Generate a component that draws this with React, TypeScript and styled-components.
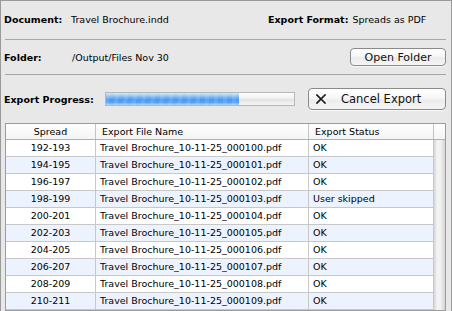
import React from 'react';
import styled, { createGlobalStyle } from 'styled-components';

const GlobalStyle = createGlobalStyle`
  html, body {
    margin: 0;
    padding: 0;
    background: #e8e8e8;
  }
  body {
    font-family: "DejaVu Sans", "Liberation Sans", sans-serif;
  }
`;

const Window = styled.div`
  box-sizing: border-box;
  width: 452px;
  height: 311px;
  border: 1px solid #9a9a9a;
  border-bottom: none;
  background: #e8e8e8;
  padding: 0 5px 0 3px;
  display: flex;
  flex-direction: column;
  overflow: hidden;
  font-size: 9.5px;
  color: #000;
`;

const InfoRow = styled.div<{ $h: number; $pb?: number }>`
  display: flex;
  align-items: center;
  height: ${(p) => p.$h}px;
  padding-bottom: ${(p) => p.$pb ?? 0}px;
  box-sizing: border-box;
  flex: none;
`;

const Group = styled.div<{ $w?: number }>`
  display: flex;
  align-items: center;
  flex: ${(p) => (p.$w ? `0 0 ${p.$w}px` : '1 1 auto')};
`;

const Label = styled.span<{ $w?: number }>`
  font-weight: bold;
  white-space: nowrap;
  flex: none;
  width: ${(p) => (p.$w ? `${p.$w}px` : 'auto')};
`;

const Value = styled.span<{ $gap?: number }>`
  white-space: nowrap;
  margin-left: ${(p) => p.$gap ?? 0}px;
`;

const Divider = styled.div`
  flex: none;
  height: 0;
  margin-left: 1px;
  border-top: 1px solid #a7a7a7;
`;

const AquaButton = styled.button<{ $w: number; $h: number; $fs: number; $start?: boolean }>`
  box-sizing: border-box;
  width: ${(p) => p.$w}px;
  height: ${(p) => p.$h}px;
  margin-left: auto;
  padding: ${(p) => (p.$start ? '0 0 0 7px' : '0')};
  border: 1px solid #8a8a8a;
  border-radius: 4px;
  background: linear-gradient(#ffffff, #f7f7f7 45%, #ececec 55%, #f5f5f5);
  font-family: "DejaVu Sans", "Liberation Sans", sans-serif;
  font-size: ${(p) => p.$fs}px;
  color: #111;
  display: flex;
  align-items: center;
  justify-content: ${(p) => (p.$start ? 'flex-start' : 'center')};
  gap: 15px;
  box-shadow: 0 1px 0 rgba(255, 255, 255, 0.7);
`;

const Progress = styled.div`
  box-sizing: border-box;
  width: 190px;
  height: 14px;
  border: 1px solid #b8b8b8;
  background: linear-gradient(#fdfdfd, #f1f1f1 45%, #e3e3e3 55%, #f5f5f5);
  overflow: hidden;
  flex: none;
`;

const ProgressFill = styled.div`
  height: 100%;
  background:
    repeating-linear-gradient(95deg, rgba(255, 255, 255, 0.1) 0 4px, rgba(255, 255, 255, 0) 4px 9px),
    linear-gradient(#cfe6fc 0%, #a0cdf7 20%, #6aaef3 40%, #4b97ec 58%, #5ba5f1 80%, #acd3f8 100%);
`;

const Table = styled.div`
  box-sizing: border-box;
  margin-left: 1px;
  width: 441px;
  height: 188px;
  flex: none;
  border: 1px solid #9c9c9c;
  background: #fff;
  display: flex;
  flex-direction: column;
  overflow: hidden;
`;

const HeaderRow = styled.div`
  display: grid;
  grid-template-columns: 90px 213px 125px 11px;
  height: 16px;
  box-sizing: border-box;
  border-bottom: 1px solid #b0b0b0;
  background: linear-gradient(#ffffff, #f4f4f4);
  flex: none;
`;

const HeadCell = styled.div<{ $center?: boolean; $plain?: boolean }>`
  box-sizing: border-box;
  border-right: ${(p) => (p.$plain ? 'none' : '1px solid #c4c4c4')};
  padding-left: ${(p) => (p.$center ? 0 : 6)}px;
  text-align: ${(p) => (p.$center ? 'center' : 'left')};
  line-height: 15px;
  white-space: nowrap;
  overflow: hidden;
`;

const Body = styled.div`
  display: flex;
  flex: 1;
  min-height: 0;
`;

const Rows = styled.div`
  width: 428px;
  flex: none;
`;

const Row = styled.div<{ $alt: boolean }>`
  display: grid;
  grid-template-columns: 90px 213px 125px;
  height: 17px;
  box-sizing: border-box;
  border-bottom: 1px solid #c8c8c8;
  background: ${(p) => (p.$alt ? '#edf3fe' : '#ffffff')};
`;

const Cell = styled.div<{ $center?: boolean }>`
  box-sizing: border-box;
  border-right: 1px solid #c8c8c8;
  padding-left: ${(p) => (p.$center ? 0 : 4)}px;
  text-align: ${(p) => (p.$center ? 'center' : 'left')};
  line-height: 16px;
  white-space: nowrap;
  overflow: hidden;
`;

const Track = styled.div`
  flex: 1;
  background: linear-gradient(to right, #d6d6d6, #f4f4f4 30%, #f1f1f1 60%, #d4d4d4);
`;

const CloseIcon = () => (
  <svg width="10" height="10" viewBox="0 0 10 10">
    <path d="M1 1L9 9M9 1L1 9" stroke="#1a1a1a" strokeWidth="1.7" strokeLinecap="square" />
  </svg>
);

type Item = { spread: string; file: string; status: string };

const items: Item[] = Array.from({ length: 10 }, (_, i) => {
  const first = 192 + i * 2;
  return {
    spread: `${first}-${first + 1}`,
    file: `Travel Brochure_10-11-25_0001${String(i).padStart(2, '0')}.pdf`,
    status: first === 198 ? 'User skipped' : 'OK',
  };
});

const progress = 0.705;

const App = () => {
  return (
    <>
      <GlobalStyle />
      <Window>
        <InfoRow $h={38} $pb={2}>
          <Group $w={264}>
            <Label $w={67}>Document:</Label>
            <Value>Travel Brochure.indd</Value>
          </Group>
          <Group>
            <Label>Export Format:</Label>
            <Value $gap={4}>Spreads as PDF</Value>
          </Group>
        </InfoRow>
        <Divider />
        <InfoRow $h={34}>
          <Label $w={68}>Folder:</Label>
          <Value>/Output/Files Nov 30</Value>
          <AquaButton type="button" $w={96} $h={18} $fs={11}>
            Open Folder
          </AquaButton>
        </InfoRow>
        <Divider />
        <InfoRow $h={48}>
          <Label $w={101}>Export Progress:</Label>
          <Progress>
            <ProgressFill style={{ width: `${progress * 100}%` }} />
          </Progress>
          <AquaButton type="button" $w={138} $h={22} $fs={11.5} $start>
            <CloseIcon />
            Cancel Export
          </AquaButton>
        </InfoRow>
        <Table>
          <HeaderRow>
            <HeadCell $center>Spread</HeadCell>
            <HeadCell>Export File Name</HeadCell>
            <HeadCell>Export Status</HeadCell>
            <HeadCell $plain />
          </HeaderRow>
          <Body>
            <Rows>
              {items.map((item, i) => (
                <Row key={item.spread} $alt={i % 2 === 1}>
                  <Cell $center>{item.spread}</Cell>
                  <Cell>{item.file}</Cell>
                  <Cell>{item.status}</Cell>
                </Row>
              ))}
            </Rows>
            <Track />
          </Body>
        </Table>
      </Window>
    </>
  );
};

export default App;
